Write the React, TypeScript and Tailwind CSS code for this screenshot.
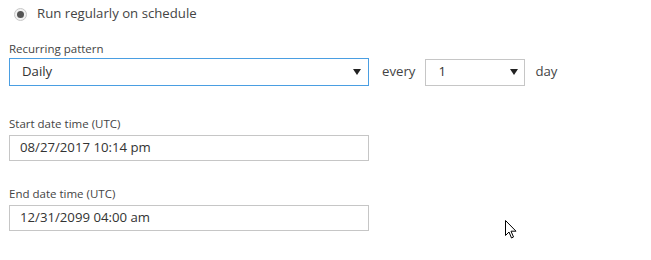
const font = { fontFamily: '"Segoe UI", "Open Sans", "Liberation Sans", sans-serif' };

const Caret = () => (
  <svg width="8" height="6" viewBox="0 0 8 6" className="shrink-0">
    <path d="M0 0 H8 L4 6 Z" fill="#222" />
  </svg>
);

const Field = ({ label, value }: { label: string; value: string }) => (
  <div className="flex flex-col">
    <div className="text-[11.5px] leading-[16px] text-[#444] mb-[3px]">{label}</div>
    <div className="w-[360px] h-[26px] border border-[#c6c6c6] bg-white flex items-center pl-[10px] text-[13.2px] text-[#333]">
      {value}
    </div>
  </div>
);

export default function App() {
  return (
    <div className="relative w-[651px] h-[260px] bg-white text-[#333]" style={font}>
      <div className="flex flex-col pl-[9px] pt-[5px]">
        <div className="flex items-center h-[18px] ml-[5px]">
          <span className="w-[13px] h-[13px] rounded-full border border-[#c8c8c8] bg-[#f2f2f2] flex items-center justify-center">
            <span className="w-[7px] h-[7px] rounded-full bg-[#555]" />
          </span>
          <span className="ml-[10px] text-[13.2px] text-[#444]">Run regularly on schedule</span>
        </div>

        <div className="mt-[18px] text-[11.5px] leading-[16px] text-[#444]">Recurring pattern</div>
        <div className="flex items-center mt-[1px]">
          <div className="w-[360px] h-[28px] border border-[#4a9ee2] bg-white flex items-center justify-between pl-[12px] pr-[7px] text-[13.2px] text-[#333]">
            <span>Daily</span>
            <Caret />
          </div>
          <span className="ml-[13px] text-[13.2px] text-[#444]">every</span>
          <div className="ml-[10px] w-[100px] h-[27px] border border-[#c6c6c6] bg-white flex items-center justify-between pl-[12px] pr-[6px] text-[13.2px] text-[#333]">
            <span>1</span>
            <Caret />
          </div>
          <span className="ml-[10px] text-[13.2px] text-[#444]">day</span>
        </div>

        <div className="mt-[30px]">
          <Field label="Start date time (UTC)" value="08/27/2017 10:14 pm" />
        </div>
        <div className="mt-[25px]">
          <Field label="End date time (UTC)" value="12/31/2099 04:00 am" />
        </div>
      </div>

      <svg className="absolute left-[505px] top-[220px]" width="12" height="19" viewBox="0 0 12 19">
        <path d="M0.5 0.5 V15.5 L4 12 L6.5 18 L8.5 17 L6 11.2 H11 Z" fill="#fff" stroke="#000" strokeWidth="1" strokeLinejoin="round" />
      </svg>
    </div>
  );
}
